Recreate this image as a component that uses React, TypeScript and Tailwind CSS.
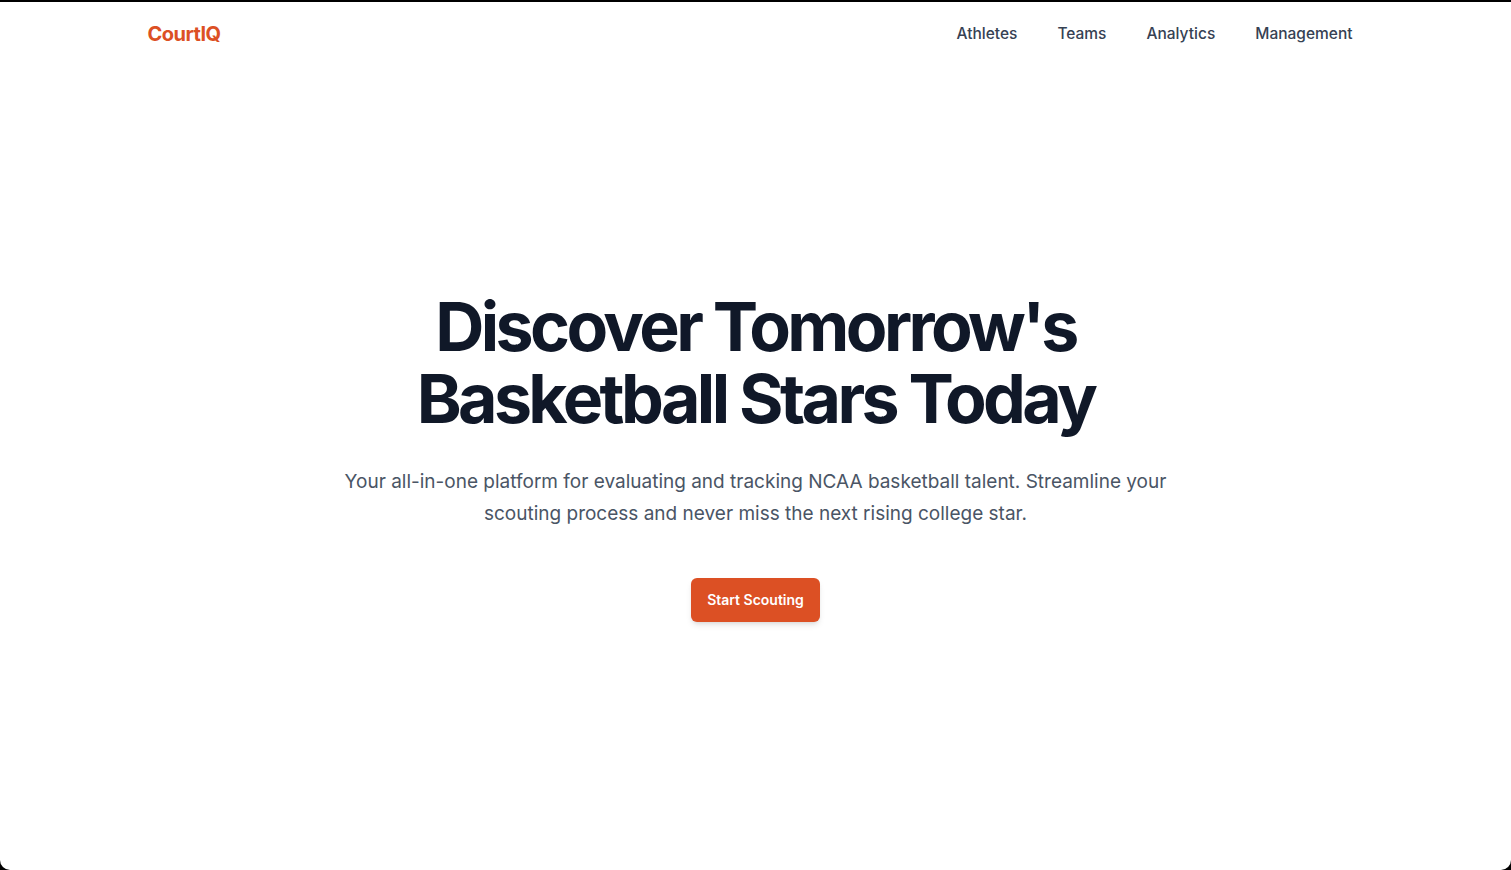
import React from "react";

const navLinks = ["Athletes", "Teams", "Analytics", "Management"];

const App = () => {
    return (
        <div className="h-screen bg-black pt-[2px] font-['Inter',sans-serif]">
            <div className="h-full bg-white rounded-b-[10px] overflow-hidden">
                <header className="mx-auto max-w-7xl px-8">
                    <div className="flex h-[63px] items-center justify-between">
                        <a href="#" className="text-xl font-bold text-[#dc5024] tracking-tight">
                            CourtIQ
                        </a>
                        <nav className="flex items-center gap-10 pr-[11px]">
                            {navLinks.map((link) => (
                                <a key={link} href="#" className="text-[15.5px] font-medium text-gray-700 hover:text-gray-900">
                                    {link}
                                </a>
                            ))}
                        </nav>
                    </div>
                </header>

                <main className="mx-auto max-w-7xl px-8 pt-[225px] text-center">
                    <h1 className="text-[68px] leading-[72px] font-bold tracking-[-0.053em] text-gray-900">
                        Discover Tomorrow's
                        <br />
                        Basketball Stars Today
                    </h1>
                    <p className="mx-auto mt-8 max-w-4xl text-[19px] leading-8 text-gray-600">
                        Your all-in-one platform for evaluating and tracking NCAA basketball talent. Streamline your
                        scouting process and never miss the next rising college star.
                    </p>
                    <div className="mt-12 flex justify-center">
                        <a href="#" className="rounded-md bg-[#dc5024] px-4 py-3 text-sm font-semibold text-white shadow-md hover:bg-[#c8461e]">
                            Start Scouting
                        </a>
                    </div>
                </main>
            </div>
        </div>
    );
};

export default App;
